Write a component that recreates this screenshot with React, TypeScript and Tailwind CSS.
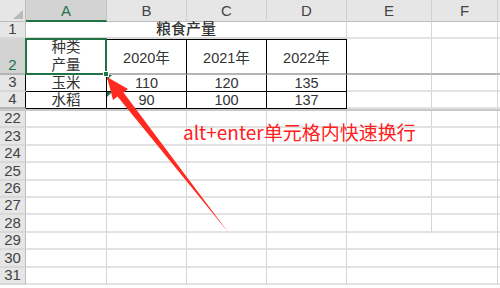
const COLS = [
  { key: "A", w: "w-[81px]" },
  { key: "B", w: "w-[80px]" },
  { key: "C", w: "w-[80px]" },
  { key: "D", w: "w-[80px]" },
  { key: "E", w: "w-[85px]" },
  { key: "F", w: "w-[66px]" },
  { key: "", w: "w-[60px]" },
];

const txt = "flex items-end justify-center text-[14.5px] leading-[16px] text-[#333]";

function RowHead({ n, className }: { n: string; className: string }) {
  return (
    <div
      className={`w-[26px] shrink-0 flex items-end justify-center text-[15px] leading-[16px] ${className}`}
    >
      {n}
    </div>
  );
}

function ErrMark() {
  return (
    <div className="absolute left-0 top-0 w-0 h-0 border-t-[5px] border-r-[5px] border-t-[#1e7145] border-r-transparent" />
  );
}

function Arrow() {
  return (
    <svg
      className="absolute left-0 top-0 pointer-events-none z-20"
      width="500"
      height="288"
      viewBox="0 0 500 288"
    >
      <polygon
        points="107,77 128,89 123.5,92.5 228,232 117.5,96.5 113,100"
        fill="#ff2a1f"
      />
    </svg>
  );
}

export default function App() {
  const lower = ["22", "23", "24", "25", "26", "27", "28", "29", "30", "31"];
  return (
    <div className="relative w-[500px] h-[288px] overflow-hidden bg-white font-['Liberation_Sans','Noto_Sans_CJK_SC',sans-serif]">
      {/* column headers */}
      <div className="flex h-[22px]">
        <div className="relative w-[26px] shrink-0 bg-[#e6e6e6] border-r border-b border-[#bcbcbc]">
          <div className="absolute left-[13px] top-[10px] w-0 h-0 border-b-[9px] border-l-[10px] border-b-[#b9b9b9] border-l-transparent" />
        </div>
        {COLS.map((c, i) =>
          c.key === "A" ? (
            <div
              key={i}
              className={`${c.w} shrink-0 flex items-center justify-center pt-[2px] bg-[#d3d3d3] text-[#217346] text-[15px] border-r border-r-[#c4c4c4] border-b-2 border-b-[#217346]`}
            >
              {c.key}
            </div>
          ) : (
            <div
              key={i}
              className={`${c.w} shrink-0 flex items-center justify-center pt-[2px] bg-[#e6e6e6] text-[#444] text-[15px] border-r border-r-[#d0d0d0] border-b border-b-[#bcbcbc]`}
            >
              {c.key}
            </div>
          )
        )}
      </div>

      {/* row 1 */}
      <div className="flex h-[17px]">
        <RowHead n="1" className="bg-[#e6e6e6] text-[#444] border-r border-[#bcbcbc] border-b-2 border-b-[#d8d8d8]" />
        <div className={`w-[321px] shrink-0 ${txt} text-[15px] font-medium border-r border-r-[#d4d4d4] border-b-2 border-b-[#dadada]`}>
          粮食产量
        </div>
        <div className="w-[85px] shrink-0 border-r border-r-[#d4d4d4] border-b-2 border-b-[#e2e2e2]" />
        <div className="w-[66px] shrink-0 border-r border-r-[#d4d4d4] border-b-2 border-b-[#e2e2e2]" />
        <div className="w-[60px] shrink-0 border-b-2 border-b-[#e2e2e2]" />
      </div>

      {/* row 2 */}
      <div className="flex h-[36px]">
        <RowHead n="2" className="bg-[#d3d3d3] text-[#217346] border-r border-[#bcbcbc] border-b-2 border-b-[#b4b4b4]" />
        <div className="relative w-[81px] shrink-0 flex flex-col items-center justify-center text-[14.5px] leading-[18px] text-[#333] border-r border-r-black border-b-2 border-b-[#b4b4b4]">
          <span>种类</span>
          <span>产量</span>
          <div className="absolute -left-px -top-px -right-px -bottom-[2px] border-2 border-[#217346] z-10">
            <div className="absolute -right-[4px] -bottom-[4px] w-[6px] h-[6px] bg-[#217346] border border-white" />
          </div>
        </div>
        {["2020年", "2021年", "2022年"].map((y) => (
          <div
            key={y}
            className="w-[80px] shrink-0 flex items-center justify-center pt-[4px] text-[14.5px] text-[#333] border-t border-t-black border-r border-r-black border-b-2 border-b-[#b4b4b4]"
          >
            {y}
          </div>
        ))}
        <div className="w-[85px] shrink-0 border-r border-r-[#d4d4d4] border-b-2 border-b-[#b4b4b4]" />
        <div className="w-[66px] shrink-0 border-r border-r-[#d4d4d4] border-b-2 border-b-[#b4b4b4]" />
        <div className="w-[60px] shrink-0 border-b-2 border-b-[#b4b4b4]" />
      </div>

      {/* rows 3, 4 */}
      {[
        { n: "3", vals: ["玉米", "110", "120", "135"] },
        { n: "4", vals: ["水稻", "90", "100", "137"] },
      ].map((r) => (
        <div key={r.n} className="flex h-[17px]">
          <RowHead
            n={r.n}
            className={`bg-[#e6e6e6] text-[#444] border-r border-r-black border-b-2 ${r.n === "4" ? "border-b-[#b4b4b4]" : "border-b-[#d8d8d8]"}`}
          />
          {r.vals.map((v, i) => (
            <div
              key={i}
              className={`relative ${i === 0 ? "w-[81px]" : "w-[80px]"} shrink-0 ${txt} border-r border-r-black border-b border-b-black`}
            >
              {i === 1 && <ErrMark />}
              {v}
            </div>
          ))}
          <div className="w-[85px] shrink-0 border-r border-r-[#d4d4d4] border-b-2 border-b-[#e2e2e2]" />
          <div className="w-[66px] shrink-0 border-r border-r-[#d4d4d4] border-b-2 border-b-[#e2e2e2]" />
          <div className="w-[60px] shrink-0 border-b-2 border-b-[#e2e2e2]" />
        </div>
      ))}

      {/* hidden rows marker */}
      <div className="h-[2px] bg-[#c8c8c8]" />

      {/* rows 22 - 31 */}
      {lower.map((n) => {
        const gapEF = Number(n) >= 29;
        return (
          <div key={n} className="flex h-[17.4px]">
            <RowHead n={n} className="bg-[#e6e6e6] text-[#444] border-r border-r-[#bcbcbc] border-b-2 border-b-[#d8d8d8]" />
            <div className="w-[81px] shrink-0 border-r border-r-[#d4d4d4] border-b-2 border-b-[#e2e2e2]" />
            <div className="w-[80px] shrink-0 border-r border-r-[#d4d4d4] border-b-2 border-b-[#e2e2e2]" />
            <div className="w-[80px] shrink-0 border-r border-r-[#d4d4d4] border-b-2 border-b-[#e2e2e2]" />
            <div className="w-[80px] shrink-0 border-r border-r-[#d4d4d4] border-b-2 border-b-[#e2e2e2]" />
            <div className={`w-[85px] shrink-0 border-b-2 border-b-[#e2e2e2] ${gapEF ? "" : "border-r border-r-[#d4d4d4]"}`} />
            <div className="w-[66px] shrink-0 border-r border-r-[#d4d4d4] border-b-2 border-b-[#e2e2e2]" />
            <div className="w-[60px] shrink-0 border-b-2 border-b-[#e2e2e2]" />
          </div>
        );
      })}

      <div className="absolute left-[183px] top-[120px] z-20 whitespace-nowrap text-[19px] leading-[24px] text-[#ff2020] font-['Noto_Sans_CJK_SC',sans-serif]">
        alt+enter单元格内快速换行
      </div>
      <Arrow />
    </div>
  );
}
